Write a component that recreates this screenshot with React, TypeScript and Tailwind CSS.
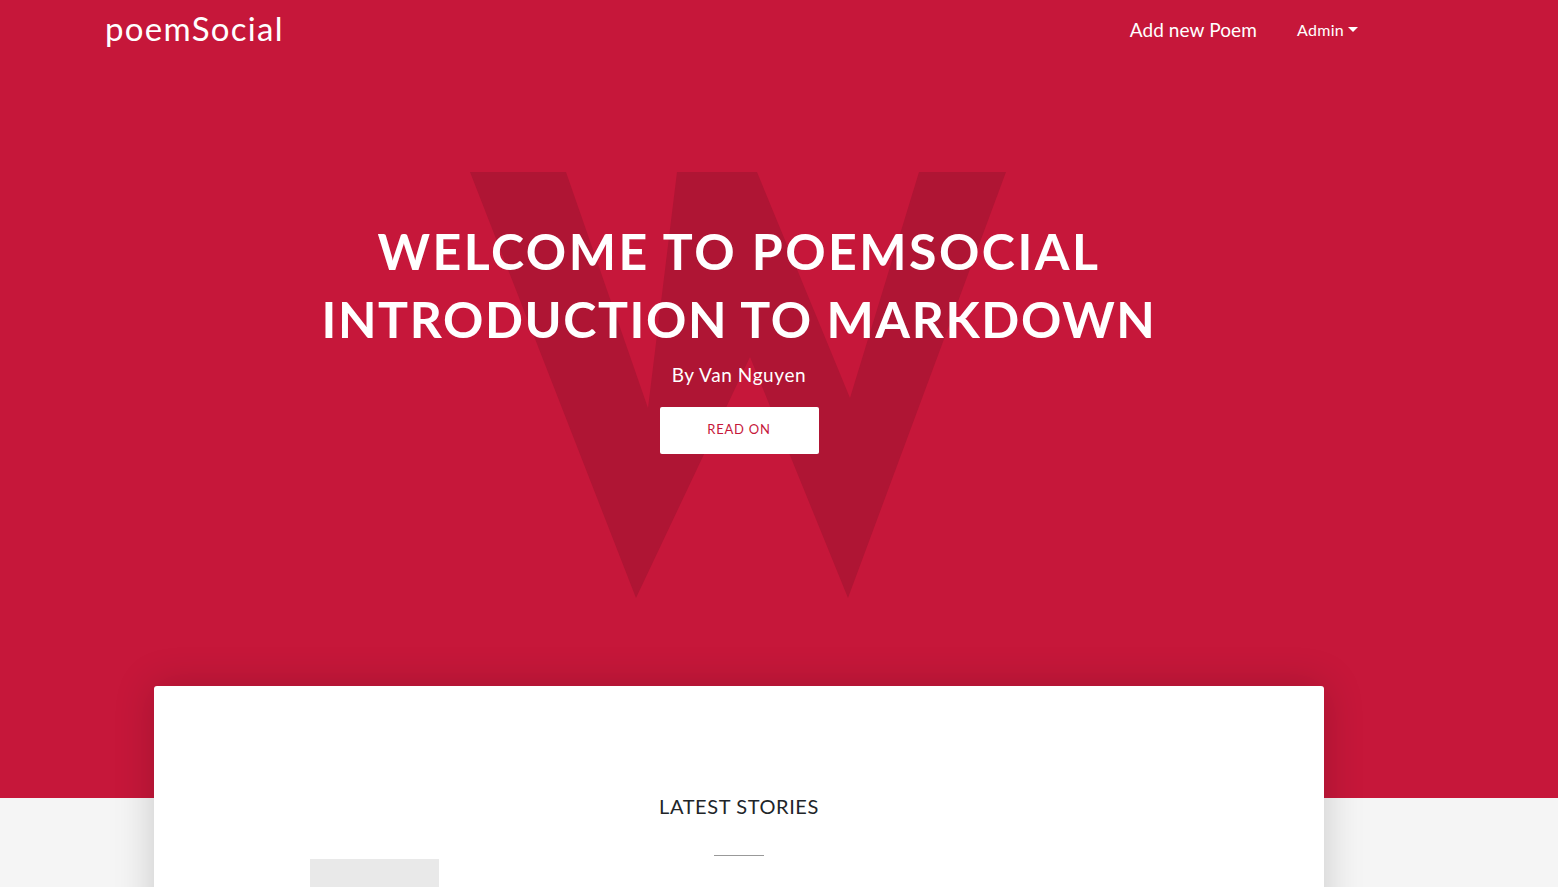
export default function App() {
  return (
    <div className="min-h-screen bg-[#f5f5f5] font-['Lato',sans-serif] overflow-hidden">
      {/* Hero */}
      <section className="relative bg-[#c6173a] h-[798px]">
        <svg
          className="absolute left-0 top-0 pointer-events-none"
          width="1558"
          height="798"
          viewBox="0 0 1558 798"
        >
          <polygon
            fill="#af1534"
            points="470,172 566,172 648,408 677,172 757,172 850,398 919,172 1006,172 848,598 750,357 636,598"
          />
        </svg>

        <nav className="relative w-[1478px] h-[60px] flex items-center justify-between pl-[105px] pr-[120px]">
          <a className="text-white text-[33px] tracking-[1.3px] leading-none pb-1">poemSocial</a>
          <div className="flex items-center gap-10 text-white">
            <a className="text-[19px] tracking-[0.1px]">Add new Poem</a>
            <a className="text-[16px] flex items-center gap-1 tracking-[0.3px]">
              Admin
              <span className="inline-block w-0 h-0 border-l-[5px] border-r-[5px] border-t-[5px] border-l-transparent border-r-transparent border-t-white mb-[2px]" />
            </a>
          </div>
        </nav>

        <div className="relative w-[1478px] flex flex-col items-center pt-[157px]">
          <h1 className="text-white font-bold uppercase text-[50px] leading-[68px] tracking-[1.6px] text-center">
            <span className="tracking-[2.5px]">Welcome to poemSocial</span>
            <br />
            Introduction to Markdown
          </h1>
          <p className="text-white text-[19px] tracking-[0.6px] mt-[8px]">By Van Nguyen</p>
          <button className="mt-[17px] w-[159px] h-[47px] bg-white rounded-[2px] text-[#c6173a] text-[13px] tracking-[0.8px] uppercase">
            Read on
          </button>
        </div>
      </section>

      {/* Latest stories */}
      <section className="relative w-[1478px]">
        <div className="absolute left-[154px] top-[-112px] w-[1170px] h-[400px] bg-white rounded-t-[3px] shadow-[0_0_40px_rgba(0,0,0,0.18)] flex flex-col items-center">
          <h2 className="mt-[110px] text-[#212529] text-[20px] tracking-[0.6px] uppercase leading-none">
            Latest stories
          </h2>
          <div className="mt-[39px] w-[50px] h-px bg-[#999]" />
          <div className="self-start ml-[156px] mt-[3px] w-[129px] h-[120px] bg-[#e9e9e9]" />
        </div>
      </section>
    </div>
  );
}
